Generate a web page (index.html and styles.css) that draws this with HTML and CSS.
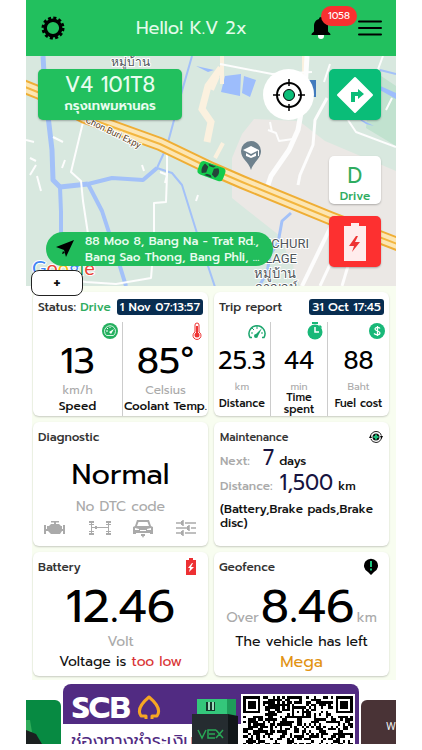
FILE: index.html
```html
<!DOCTYPE html>
<html lang="en">
<head>
<meta charset="utf-8">
<meta name="viewport" content="width=device-width, initial-scale=1">
<title>Vehicle dashboard</title>
<link rel="stylesheet" href="styles.css">
</head>
<body>
<div class="app">
  <header class="topbar">
    <button class="icon-btn" aria-label="Settings">
      <svg width="24" height="24" viewBox="-12 -12 24 24"><circle r="7.8" fill="none" stroke="#000" stroke-width="3.400"/><circle r="10" fill="none" stroke="#000" stroke-width="3" stroke-dasharray="3 2.236"/></svg>
    </button>
    <h1 class="greeting">Hello! K.V 2x</h1>
    <div class="actions">
      <button class="icon-btn bell" aria-label="Notifications">
        <svg width="22" height="24" viewBox="0 0 22 24"><circle cx="11" cy="20" r="3" fill="#fff"/><path d="M11 1c1.200 0 2 .8 2 2 3.500 1 5 4 5 7v5c0 1.500 2.500 1.500 2.500 4h-19c0-2.500 2.500-2.500 2.500-4v-5c0-3 1.500-6 5-7 0-1.200.8-2 2-2z"/></svg>
        <span class="badge">1058</span>
      </button>
      <button class="icon-btn" aria-label="Menu">
        <svg width="24" height="18" viewBox="0 0 24 18"><path d="M1 2.500h22M1 9h22M1 15.500h22" stroke="#000" stroke-width="2" stroke-linecap="round"/></svg>
      </button>
    </div>
  </header>

  <section class="map">
    <svg class="map-art" viewBox="26 56 370 230" preserveAspectRatio="xMidYMid slice">
      <path fill="#d8e8df" d="M0 0h450v300H0z"/>
      <path fill="#ebe8e5" d="M232 158l10-24 12-15 45 2 26 20 71 30v115h-96l-20-50-33-26-15-12z"/>
      <path fill="#c1e2cf" d="M372 70l24 16v60l-30-18z"/>
      <path fill="#d8e8df" d="M270 262l22-5 4 29h-40z"/>
      <g fill="none" stroke="#a3c1f8" stroke-linejoin="round">
        <path stroke-width="5" d="M43 56l2 34 7 60 1 30 7 7 28-3"/>
        <path stroke-width="4" d="M60 187l1 25v30M88 184l24-6 31 2 14-12M88 184l14 27 16 49 8 26"/>
        <path stroke-width="2" d="M192 56l-12 42-13 48-10 22 15 5 10 12 14 45 20 60M380 70l16 4"/>
        <path stroke-width="3" d="M291 213l-9 8-4 22-8 12-3 18-8 13"/>
      </g>
      <path fill="#9dbdfc" d="M225 76l16-2-1 22-19-4zM244 76l12 4-6 17-8-4zM196 66l18 4-6 2zM378 85l18 8v6l-18-10zM354 116l20 10-8-2z"/>
      <g fill="none" stroke="#fbf1df"><path stroke-width="7" d="M221 68l-13 18-6 23 9 13-4 20"/><path stroke-width="4" d="M218 76l-6 14M215 158l8-15M304 56v20M222 56v28"/></g>
      <g fill="none" stroke="#fdfdfd" stroke-linejoin="round">
        <path stroke-width="2" d="M84 118l-13 54 10 9 2 20 5 33M167 143v32l-1 27-12 1v40l-3 35-35 6-30-2-26-4M26 140l8 2M30 158l6 3M30 175l6-10M37 176l4 15M65 160l-3 8M53 137l10 5M220 64l52 10 40-2M330 64l-6 18M383 56l-6 16M348 120l8 12 40 15M268 130l8 3 3 8 14-2M270 122l2 10M245 155l9 5M386 110l6-12M198 195l-2 6M160 172l7 3-2 8M142 165l2 6"/>
        <path stroke-width="5" d="M307 56l-2 34-7 40-9 20-18 26-5 15"/>
        <path stroke-width="3" d="M327 98l-12 22-2 25-13 30-2 10M360 226l-18 60M348 226l-28 60"/>
        <path stroke-width="4" d="M334 220l-32 66"/>
      </g>
      <g fill="none" stroke-linejoin="round">
        <path stroke="#efae35" stroke-width="14" d="M20 85l20 8 45 24 75 27 52 25 30 13 88 36 70 27"/>
        <path stroke="#fce6b4" stroke-width="10" d="M20 85l20 8 45 24 75 27 52 25 30 13 88 36 70 27"/>
        <path stroke="#f3b63f" stroke-width="2" d="M20 85l20 8 45 24 75 27 52 25 30 13 88 36 70 27"/>
      </g>
      <text class="road-name" transform="translate(85 122) rotate(26)">Chon Buri Expy</text>
      <text class="place" x="111" y="66">หมู่บ้าน</text>
      <g class="place place-lg"><text x="309" y="248" text-anchor="end">AMCHURI</text><text x="297" y="263" text-anchor="end">VILLAGE</text><text x="254" y="278">หมู่บ้าน</text><text x="255" y="292">กาญจน์</text></g>
      <path fill="#427bbd" d="M306 80h10v17h-10z"/><path fill="#fff" d="M311 82l-3 6 3 4z"/>
      <g><path fill="#6e818d" d="M251 170c-2-8-10-11-10-19a10 10 0 0 1 20 0c0 8-8 11-10 19z"/><path fill="#fff" d="M243 150l8-4 8 4-8 4zM246 153l5 3 5-3v3l-5 2-5-2zM258 150h1v6h-1z"/></g>
      <g transform="translate(211 171) rotate(20)"><rect x="-13" y="-7" width="27" height="14" rx="4" fill="#13cb4c"/><path fill="#25433a" d="M-8-5l4 2v6l-4 2c-2-3-2-7 0-10zM6-5c3 3 3 7 0 10l-4-2v-6zM-5-6H3l-2 2h-4zM-5 6H3L1 4h-4z"/></g>
      <text class="google" x="32" y="275"><tspan fill="#4285f4">G</tspan><tspan fill="#ea4335">o</tspan><tspan fill="#fbbc05">o</tspan><tspan fill="#4285f4">g</tspan><tspan fill="#34a853">l</tspan><tspan fill="#ea4335">e</tspan></text>
    </svg>
    <div class="plate"><strong>V4 101T8</strong><span>กรุงเทพมหานคร</span></div>
    <button class="locate" aria-label="Locate vehicle">
      <svg width="34" height="34" viewBox="-17 -17 34 34"><circle r="12" fill="none" stroke="#000" stroke-width="2"/><circle r="5.500" fill="#0abd78" stroke="#000"/><path d="M0-16v7M0 9v7M-16 0h7M9 0h7" stroke="#000" stroke-width="1.500"/></svg>
    </button>
    <div class="side">
      <button class="tile route" aria-label="Directions">
        <svg width="38" height="38" viewBox="-19 -19 38 38"><path fill="#fff" stroke="#fff" stroke-width="2" stroke-linejoin="round" d="M0-17L17 0 0 17-17 0z"/><path fill="#0abd78" d="M-4 7v-10H3v-3l6 5-6 5v-3H0v6z"/></svg>
      </button>
      <div class="gear"><b>D</b><span>Drive</span></div>
      <button class="tile alert" aria-label="Battery alert">
        <svg width="24" height="40" viewBox="0 0 24 40"><path fill="#ffecec" d="M1 4h7V1h8v3h7v35H1z"/><path fill="#e33" d="M13 14l-7 10h5l-2 6 8-10h-5l3-6z"/></svg>
      </button>
    </div>
    <div class="address">
      <svg width="18" height="18" viewBox="0 0 18 18"><path d="M18 0L10 17 8 10 0 7z"/><path d="M7 11l2 2-3 1z"/></svg>
      <p>88 Moo 8, Bang Na - Trat Rd.,<br>Bang Sao Thong, Bang Phli, ...</p>
    </div>
    <button class="add" aria-label="Add">+</button>
  </section>

  <main class="cards">
    <section class="card">
      <div class="card-head"><h2>Status: <em>Drive</em></h2><time class="stamp">1 Nov 07:13:57</time></div>
      <div class="stats stats-2">
        <div class="stat">
          <svg class="stat-icon" width="16" height="18" viewBox="0 0 16 18"><circle cx="8" cy="9" r="8" fill="#25b05f"/><path d="M4.500 13.500A5.500 5.500 0 1 1 11.500 13.500z" fill="none" stroke="#d9f5e4"/><path d="M7 10l5-3-3 5z" fill="#fff"/><path d="M4 9h2M8 5v1M5 6l1 1" stroke="#fff"/></svg>
          <b>13</b><i>km/h</i><span>Speed</span>
        </div>
        <div class="stat">
          <svg class="stat-icon temp" width="10" height="18" viewBox="0 0 10 18"><path d="M3 10V3a2 2 0 0 1 4 0v7a4 4 0 1 1-4 0z" fill="#fff" stroke="#e33"/><circle cx="5" cy="13" r="2.500" fill="#e33"/><path d="M5 4v9" stroke="#e33" stroke-width="2"/></svg>
          <b>85°</b><i>Celsius</i><span>Coolant Temp.</span>
        </div>
      </div>
    </section>

    <section class="card">
      <div class="card-head"><h2>Trip report</h2><time class="stamp">31 Oct 17:45</time></div>
      <div class="stats stats-3">
        <div class="stat">
          <svg class="stat-icon" width="18" height="18" viewBox="0 0 18 18"><path d="M4 15.500H2A8 8 0 1 1 16 15.500h-2" fill="none" stroke="#1ba56d" stroke-width="1.500"/><path d="M9 4v3M4 6l2 2M3 11h2M13 11h2" stroke="#1ba56d"/><path d="M14 6l-4 8a2 2 0 1 1-2-2z" fill="#1ba56d"/></svg>
          <b>25.3</b><i>km</i><span>Distance</span>
        </div>
        <div class="stat">
          <svg class="stat-icon" width="16" height="18" viewBox="0 0 16 18"><path d="M5 0h6v2H5zM13 3l2 2-1 1-2-2z" fill="#18b878"/><circle cx="8" cy="10" r="7.500" fill="#18b878"/><path d="M8 5v5h4" fill="none" stroke="#fff" stroke-width="1.500"/></svg>
          <b>44</b><i>min</i><span>Time spent</span>
        </div>
        <div class="stat">
          <svg class="stat-icon" width="16" height="18" viewBox="0 0 16 18"><circle cx="8" cy="9" r="8" fill="#18b878"/><path d="M11 6.500C10 5 6 5 6 7s5 2 5 4-4 2.500-6 .5M8.500 4v10" fill="none" stroke="#fff" stroke-width="1.300"/></svg>
          <b>88</b><i>Baht</i><span>Fuel cost</span>
        </div>
      </div>
    </section>

    <section class="card">
      <div class="card-head"><h2>Diagnostic</h2></div>
      <div class="diag">
        <b>Normal</b>
        <span>No DTC code</span>
        <div class="diag-icons">
          <svg width="22" height="18" viewBox="0 0 22 18" fill="#aaa"><path d="M7 2h8v1.500h-3V5h3l2 2h1v3h1V6h2v9h-2v-3h-1l-2 3H7l-3-3H2v3H0V6h2v4h1V7h2l2-2h3V3.500H7z"/></svg>
          <svg width="22" height="18" viewBox="0 0 22 18" fill="#aaa"><path d="M0 2h5v2H0zM0 14h5v2H0zM17 2h5v2h-5zM17 14h5v2h-5zM2 4h1v10H2zM19 4h1v10h-1zM0 5h5v1H0zM0 12h5v1H0zM17 5h5v1h-5zM17 12h5v1h-5zM3 8h16v1H3zM6 7h2v3H6z"/></svg>
          <svg width="20" height="20" viewBox="0 0 20 20" fill="#aaa"><path fill-rule="evenodd" d="M4 2h12l2 6 2 1v7h-3v-1H3v1H0V9l2-1zM5.500 4L4 8h12l-1.500-4zM2 10v2h4v-1zM18 10v2h-4v-1zM7 12h6v1H7z"/><path d="M8 16h4v2h-1l-1 2-1-2H8z"/></svg>
          <svg width="20" height="18" viewBox="0 0 20 18"><path d="M0 4h5M9 4h11M0 9h11M15 9h5M0 14h5M9 14h11M7 1v6M13 6v6M7 11v6" stroke="#aaa" stroke-width="1.500"/><path d="M5 4h2M11 9h2M5 14h2" stroke="#aaa" stroke-width="4"/></svg>
        </div>
      </div>
    </section>

    <section class="card">
      <div class="card-head small"><h2>Maintenance</h2>
        <svg width="14" height="14" viewBox="0 0 14 14"><circle cx="7" cy="7" r="5.500" fill="none" stroke="#222" stroke-dasharray="15 2.300"/><circle cx="7" cy="7" r="3.500" fill="#111"/><path d="M7 4.500v5M4.500 7h5" stroke="#19bf7a" stroke-width="2"/><path d="M0 8l1.500-3L3 8zM11 6l1.500 3L14 6z"/></svg>
      </div>
      <div class="service">
        <p class="next"><i>Next:</i><b>7</b><span>days</span></p>
        <p class="dist"><i>Distance:</i><b>1,500</b><span>km</span></p>
        <p class="parts">(Battery,Brake pads,Brake disc)</p>
      </div>
    </section>

    <section class="card">
      <div class="card-head"><h2>Battery</h2>
        <svg class="head-icon" width="10" height="18" viewBox="0 0 10 18"><path fill="#ed3033" d="M0 2h3V0h4v2h3v15H0z"/><path fill="#fff" d="M6 5L2 10h2l-1 4 5-5H5l2-4z"/></svg>
      </div>
      <div class="reading"><b>12.46</b><i>Volt</i><span>Voltage is <em>too low</em></span></div>
    </section>

    <section class="card">
      <div class="card-head"><h2>Geofence</h2>
        <svg class="head-icon pin" width="16" height="18" viewBox="0 0 16 18"><path d="M8 17l-3-3a7 7 0 1 1 6 0z"/><path d="M8 3v6M8 10.500v2" stroke="#1bc47d" stroke-width="2"/></svg>
      </div>
      <div class="reading fence"><p><i>Over</i><b>8.46</b><i>km</i></p><span>The vehicle has left</span><span class="zone">Mega</span></div>
    </section>
  </main>

  <section class="carousel">
    <article class="slide slide-prev"><svg width="16" height="24" viewBox="0 0 16 24"><path fill="#30ac5a" d="M0 0h4l2 12H0z"/><path fill="#1b2020" d="M0 10l10 4 6 10H0z"/></svg></article>
    <article class="slide slide-main">
      <div class="brand"><strong>SCB</strong>
        <svg width="26" height="26" viewBox="0 0 26 26"><path d="M10 24v-3H5c-5-7 2-14 8-19 6 5 13 12 8 19h-5v3" fill="none" stroke="#f6a623" stroke-width="3" stroke-linejoin="round"/></svg>
      </div>
      <div class="pay">ช่องทางชำระเงิน</div>
      <svg class="dongle" width="48" height="46" viewBox="0 0 48 46"><path fill="#34c77b" d="M5 0h30v17H5z"/><path fill="#1e9c5a" d="M35 0h9v17h-9z"/><path fill="#14352a" d="M14 3h9v9h-9z"/><path fill="#9ddcbd" d="M16 3h2v8h-2zM20 3h2v8h-2z"/><path fill="#252c30" d="M0 15h36v31H0z"/><path fill="#111719" d="M36 15l10 2v29H36z"/><path d="M6 31l4 8 4-8M24 31h-8v8h7M17 35h6M24 39l7-8M24 31l7 8" fill="none" stroke="#28a855" stroke-width="1.500"/></svg>
      <svg class="qr" viewBox="-1 -1 47 47" aria-label="QR code"><path fill="#fff" d="M-1-1h47v47H-1z"/><path id="modules" shape-rendering="crispEdges"/></svg>
    </article>
    <article class="slide slide-next">W</article>
  </section>
</div>
<script src="qr.js"></script>
</body>
</html>
```
FILE: styles.css
```css
* { box-sizing: border-box; margin: 0; padding: 0; }
body { background: #fff; color: #111; font-family: "Prompt", "Noto Sans", "Noto Sans Thai", "Liberation Sans", sans-serif; font-size: 12px; }
button { border: 0; background: none; font: inherit; color: inherit; cursor: pointer; }
svg { display: block; flex: none; }
i, em { font-style: normal; }
b { font-weight: 400; }
.app { margin: 0 26px; overflow: hidden; }

.topbar { display: grid; grid-template-columns: 92px 1fr auto; align-items: center; height: 56px; padding: 0 14px 0 15px; background: #22c05e; }
.icon-btn { display: block; justify-self: start; position: relative; }
.greeting { margin-left: 3px; color: #e2fbea; font-size: 18px; font-weight: 400; white-space: nowrap; }
.actions { display: flex; align-items: center; gap: 26px; }
.badge { position: absolute; left: 11px; top: -10px; padding: 0 7px; border-radius: 10px; background: #f83030; color: #fff; font-size: 10px; line-height: 20px; }

.map { position: relative; height: 230px; }
.map-art { width: 100%; height: 100%; }
.road-name { font-size: 9px; fill: #5e4426; stroke: #fff; stroke-width: 2px; paint-order: stroke; font-family: Roboto, sans-serif; }
.place { font-size: 12px; fill: #50555a; stroke: #fff; stroke-width: 2px; paint-order: stroke; font-family: Roboto, "Noto Sans", sans-serif; }
.place-lg { font-size: 13px; }
.google { font-family: Lato, sans-serif; font-size: 20px; stroke: #fff; stroke-width: 2px; paint-order: stroke; }
.plate { position: absolute; left: 12px; top: 13px; width: 144px; height: 51px; padding-top: 4px; border-radius: 5px; background: #22c05e; color: #e8fcef; text-align: center; box-shadow: 0 1px 2px #0004; }
.plate strong { display: block; font-size: 21px; line-height: 25px; font-weight: 400; }
.plate span { display: block; font-size: 13px; line-height: 16px; font-weight: 600; }
.locate { position: absolute; right: 82px; top: 13px; display: grid; place-items: center; width: 51px; height: 51px; border-radius: 50%; background: #fff; }
.side { position: absolute; right: 15px; top: 13px; width: 52px; }
.tile { display: grid; place-items: center; width: 100%; height: 51px; border-radius: 5px; box-shadow: 0 1px 2px #0004; }
.route { background: #0abd78; }
.alert { background: #fd3030; }
.gear { height: 48px; margin: 36px 0 12px; padding-top: 6px; border-radius: 5px; background: #fff; color: #2fac60; text-align: center; box-shadow: 0 1px 2px #0004; }
.gear b { display: block; font-size: 21px; line-height: 28px; }
.gear span { display: block; font-size: 12px; line-height: 12px; font-weight: 500; }
.address { position: absolute; left: 20px; top: 176px; display: flex; align-items: center; gap: 11px; height: 34px; width: 227px; padding-left: 10px; border-radius: 17px; background: #22bd5c; color: #e8fcef; white-space: nowrap; }
.address p { font-size: 12px; line-height: 16px; font-weight: 500; }
.add { position: absolute; left: 5px; bottom: -10px; z-index: 1; width: 52px; height: 26px; border: 1px solid #222; border-radius: 8px; background: #fff; font-size: 18px; line-height: 24px; font-weight: 500; }

.cards { display: grid; grid-template-columns: 1fr 1fr; grid-auto-rows: 124px; gap: 6px; margin-left: 6px; padding: 6px 7px 4px 1px; background: #f8fdf0; }
.card { display: flex; flex-direction: column; min-width: 0; border-radius: 6px; background: #fff; box-shadow: 0 1px 2px #0003; }
.card-head { display: flex; justify-content: space-between; align-items: center; height: 30px; padding: 0 5px; white-space: nowrap; }
.card h2 { font-size: 12px; font-weight: 500; color: #333; }
.card h2 em { color: #2fac60; }
.card-head.small { padding: 0 6px; }
.small h2 { font-size: 11px; }
.stamp { padding: 0 3px; border-radius: 3px; background: #082d50; color: #fff; font-size: 12px; line-height: 16px; font-weight: 500; }
.stats { display: grid; flex: 1; }
.stats-2 { grid-template-columns: 89fr 86fr; }
.stats-3 { grid-template-columns: 56fr 57fr 62fr; }
.stat { display: flex; flex-direction: column; align-items: center; min-width: 0; text-align: center; }
.stat + .stat { border-left: 1px solid #ccc; }
.stat-icon { align-self: flex-end; margin-right: 4px; }
.temp { margin-right: 6px; }
.stat b { font-size: 37px; line-height: 42px; color: #000; }
.stat i { font-size: 12px; line-height: 16px; color: #aaa; }
.stat span { font-size: 12px; line-height: 16px; font-weight: 500; white-space: nowrap; }
.stats-3 .stat b { font-size: 25px; line-height: 42px; }
.stats-3 .stat i { font-size: 10px; line-height: 10px; }
.stats-3 .stat span { display: flex; align-items: center; height: 24px; font-size: 11px; line-height: 12px; white-space: normal; }
.diag { text-align: center; }
.diag b { display: block; font-size: 29px; line-height: 44px; color: #000; }
.diag > span { display: block; font-size: 14px; line-height: 22px; color: #aaa; }
.diag-icons { display: flex; justify-content: space-between; align-items: center; padding: 0 12px 0 11px; }
.service { padding: 0 6px; font-size: 12px; font-weight: 500; }
.service p { display: flex; align-items: baseline; height: 25px; gap: 5px; line-height: 12px; }
.service i { color: #aaa; }
.service b { font-size: 21px; color: #17143f; }
.service .next b { margin-left: 8px; }
.service .dist b { margin-left: 2px; }
.service p.parts { display: block; height: auto; line-height: 14px; }
.head-icon { margin-right: 7px; }
.head-icon.pin { margin-right: 5px; }
.reading { display: flex; flex-direction: column; align-items: center; white-space: nowrap; }
.reading b { font-size: 47px; line-height: 50px; color: #000; }
.reading i { font-size: 14px; line-height: 20px; color: #aaa; }
.reading span { font-size: 14px; line-height: 20px; }
.reading em { color: #d93434; }
.reading p { display: flex; align-items: baseline; gap: 2px; }
.reading .zone { color: #e29313; font-size: 16px; }

.carousel { display: flex; align-items: flex-end; gap: 2px; height: 64px; overflow: hidden; }
.slide { flex: 1 1 0; min-width: 0; height: 44px; overflow: hidden; }
.slide-prev { display: flex; align-items: flex-end; border-radius: 0 6px 0 0; background: #078a42; }
.slide-main { position: relative; flex: 0 0 296px; height: 60px; border-radius: 8px 8px 0 0; background: #512b82; }
.brand { display: flex; align-items: center; gap: 5px; height: 40px; padding: 8px 9px 0; color: #fff; }
.brand strong { font-size: 31px; line-height: 32px; }
.pay { width: 180px; height: 30px; padding-left: 8px; background: #fff; color: #512b82; font-size: 18px; line-height: 34px; white-space: nowrap; }
.dongle { position: absolute; left: 129px; top: 15px; }
.qr { position: absolute; right: 4px; top: 10px; width: 114px; height: 114px; }
.slide-next { border-radius: 6px 0 0 0; background: #493336; color: #eee; font: 11px/54px Roboto, sans-serif; text-indent: 25px; }
```
FILE: qr.js
```js
// Fills the QR symbol: finder squares in the corners, data modules elsewhere.
const size = 45;
let seed = 2024;
const finder = (x, y, left, top) => {
  const dx = x - left, dy = y - top;
  if (dx < -1 || dx > 7 || dy < -1 || dy > 7) return null;
  const ring = Math.max(Math.abs(dx - 3), Math.abs(dy - 3));
  return ring === 3 || ring < 2;
};
let path = "";
for (let y = 0; y < size; y++) {
  for (let x = 0; x < size; x++) {
    seed = (seed * 1103515245 + 12345) % 2147483648;
    const fixed = finder(x, y, 0, 0) ?? finder(x, y, size - 7, 0) ?? finder(x, y, 0, size - 7);
    let on = fixed ?? seed / 2147483648 < 0.52;
    const ring = Math.max(Math.abs(x - 22), Math.abs(y - 6));
    if (ring <= 2) on = ring !== 1;
    if (on) path += `M${x} ${y}h1v1h-1z`;
  }
}
document.getElementById("modules").setAttribute("d", path);
```
